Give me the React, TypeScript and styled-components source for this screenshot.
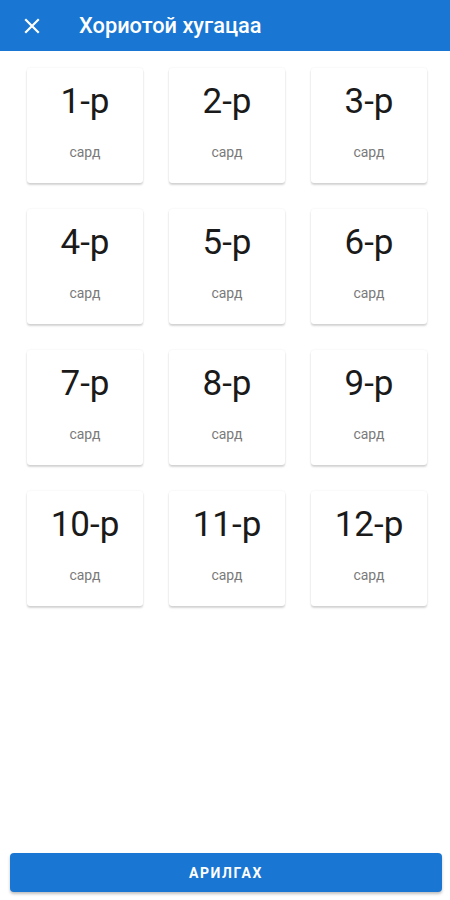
import React from 'react';
import styled, { createGlobalStyle } from 'styled-components';

const GlobalStyle = createGlobalStyle`
  html, body {
    margin: 0;
    padding: 0;
    background: #ffffff;
  }
  body {
    font-family: Roboto, "Noto Sans", "Liberation Sans", sans-serif;
  }
`;

const Screen = styled.div`
  width: 450px;
  height: 900px;
  display: flex;
  flex-direction: column;
  background: #ffffff;
  overflow: hidden;
`;

const Topbar = styled.header`
  height: 51px;
  background-color: #1976d2;
  display: flex;
  align-items: center;
  padding: 0 0 0 22px;
  box-sizing: border-box;
  flex-shrink: 0;
`;

const CloseButton = styled.button`
  width: 20px;
  height: 20px;
  padding: 0;
  border: none;
  background: none;
  display: flex;
  align-items: center;
  justify-content: center;
  margin-right: 37px;
  cursor: pointer;
`;

const Title = styled.h1`
  margin: 0;
  color: #ffffff;
  font-size: 21.8px;
  font-weight: 500;
`;

const Grid = styled.div`
  display: grid;
  grid-template-columns: repeat(3, 116px);
  column-gap: 26px;
  row-gap: 26px;
  padding: 17px 0 0 27px;
`;

const Card = styled.button`
  height: 115px;
  border: none;
  border-radius: 3px;
  background: #ffffff;
  box-shadow: 0 2px 2px rgba(0, 0, 0, 0.16), 0 0 2px rgba(0, 0, 0, 0.08);
  display: flex;
  flex-direction: column;
  align-items: center;
  padding: 14px 0 0;
  font-family: inherit;
  cursor: pointer;
`;

const Value = styled.span`
  font-size: 35px;
  color: #1a1a1a;
  line-height: 40px;
`;

const Unit = styled.span`
  margin-top: 22px;
  font-size: 14px;
  color: #7a7a7a;
`;

const Spacer = styled.div`
  flex: 1;
`;

const Footer = styled.div`
  padding: 0 8px 8px 10px;
`;

const ClearButton = styled.button`
  width: 100%;
  height: 39px;
  border: none;
  border-radius: 4px;
  background-color: #1976d2;
  color: #ffffff;
  font-family: inherit;
  font-size: 14px;
  font-weight: 700;
  letter-spacing: 1.6px;
  box-shadow: 0 2px 3px rgba(0, 0, 0, 0.25);
  cursor: pointer;
`;

const months = Array.from({ length: 12 }, (_, i) => i + 1);

export default function App() {
  return (
    <Screen>
      <GlobalStyle />
      <Topbar>
        <CloseButton aria-label='close'>
          <svg width='16' height='16' viewBox='0 0 16 16'>
            <path d='M2 2 L14 14 M14 2 L2 14' stroke='#ffffff' strokeWidth='2.2' strokeLinecap='square' />
          </svg>
        </CloseButton>
        <Title>Хориотой хугацаа</Title>
      </Topbar>

      <Grid>
        {months.map((m) => (
          <Card key={m}>
            <Value>{`${m}-р`}</Value>
            <Unit>сард</Unit>
          </Card>
        ))}
      </Grid>

      <Spacer />

      <Footer>
        <ClearButton>АРИЛГАХ</ClearButton>
      </Footer>
    </Screen>
  );
}
